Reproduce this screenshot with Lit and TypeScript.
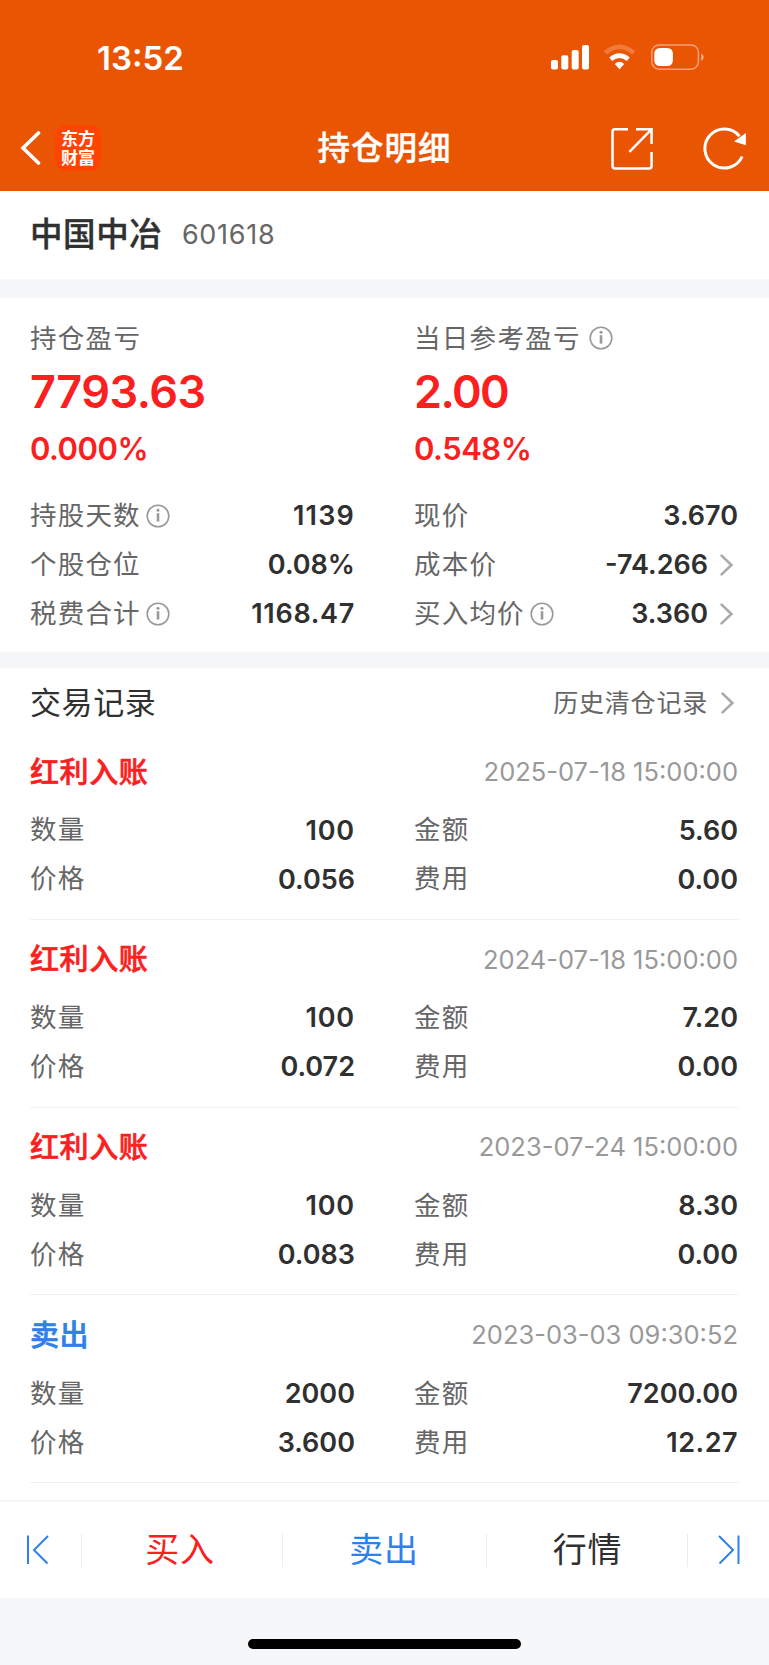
import { LitElement, html, svg, css, nothing } from "lit";
import { customElement, property } from "lit/decorators.js";

interface Trade {
  kind: string;
  tone: "up" | "down";
  time: string;
  qty: string;
  amount: string;
  price: string;
  fee: string;
}

const trades: Trade[] = [
  { kind: "红利入账", tone: "up", time: "2025-07-18 15:00:00", qty: "100", amount: "5.60", price: "0.056", fee: "0.00" },
  { kind: "红利入账", tone: "up", time: "2024-07-18 15:00:00", qty: "100", amount: "7.20", price: "0.072", fee: "0.00" },
  { kind: "红利入账", tone: "up", time: "2023-07-24 15:00:00", qty: "100", amount: "8.30", price: "0.083", fee: "0.00" },
  { kind: "卖出", tone: "down", time: "2023-03-03 09:30:52", qty: "2000", amount: "7200.00", price: "3.600", fee: "12.27" },
];

const infoIcon = html`<svg class="info" width="24" height="24" viewBox="0 0 24 24" fill="none" stroke="#999">
  <circle cx="12" cy="12" r="10.8" stroke-width="1.6" />
  <path d="M12 9.2V17.6" stroke-width="2.6" />
  <circle cx="12" cy="6.2" r="1.5" fill="#999" stroke="none" />
</svg>`;

const chevron = html`<svg class="chev" width="14" height="22" viewBox="0 0 14 22" fill="none" stroke="#aaa" stroke-width="2.6">
  <path d="M1.6 1.6L11.4 11L1.6 20.4" stroke-linecap="round" stroke-linejoin="miter" />
</svg>`;

// The digit "1" is narrow in Inter: spread numbers out by how many of them they hold.
const tracking = (value: string) => ((value.split("1").length - 1) * 2.4) / Math.max(value.length, 1);

@customElement("data-row")
export class DataRow extends LitElement {
  @property() label = "";
  @property() value = "";
  @property({ type: Boolean }) info = false;
  @property({ type: Boolean }) link = false;

  static styles = css`
    :host {
      display: flex;
      align-items: center;
      height: 49px;
    }
    .label {
      font: 400 26.5px/1 "Noto Sans CJK SC", sans-serif;
      letter-spacing: 1.2px;
      color: #666;
      padding-bottom: 3px;
    }
    .info { margin: 1px 0 0 5.5px; }
    .value {
      margin-left: auto;
      font: 600 27px/1 Inter, sans-serif;
      color: #303030;
    }
    .chev { margin: 0 4px 0 12px; }
  `;

  render() {
    return html`<span class="label">${this.label}</span>${this.info ? infoIcon : nothing}
      <span class="value" style="letter-spacing:${tracking(this.value)}px">${this.value}</span>${this.link ? chevron : nothing}`;
  }
}

@customElement("status-bar")
export class StatusBar extends LitElement {
  static styles = css`
    :host {
      display: flex;
      justify-content: space-between;
      align-items: center;
      height: 114px;
      padding: 0 64px 0 97px;
      box-sizing: border-box;
    }
    .time {
      padding-top: 2px;
      font: 600 33px/1 Inter, sans-serif;
      color: #fff;
    }
  `;

  render() {
    return html`<span class="time">13:52</span>
      <svg width="154" height="26" viewBox="0 0 154 26" fill="#fff">
        <rect x="0" y="16" width="7" height="9.4" rx="2" />
        <rect x="10.3" y="11.3" width="7" height="14.1" rx="2" />
        <rect x="20.7" y="6" width="7" height="19.4" rx="2" />
        <rect x="31" y="1" width="7" height="24.4" rx="2" />
        <path d="M54.2 9.3Q68.5 -2.7 82.8 9.3" transform="translate(0 -0.5)" fill="none" stroke="#fff" stroke-opacity=".22" stroke-width="4.6" />
        <path d="M59.7 15.2Q68.5 8 77.3 15.2" fill="none" stroke="#fff" stroke-width="4.6" />
        <path d="M63.8 20Q68.5 15.7 73.2 20L68.5 25.2Z" />
        <rect x="100.8" y="0.9" width="46.6" height="24.3" rx="7.4" fill="none" stroke="#fff" stroke-opacity=".45" stroke-width="1.5" />
        <rect x="103.3" y="4" width="18.6" height="18" rx="5.4" />
        <path d="M150.2 9.5V17Q152.8 15.6 152.8 13.2T150.2 9.5Z" fill-opacity=".5" />
      </svg>`;
  }
}

@customElement("nav-header")
export class NavHeader extends LitElement {
  static styles = css`
    :host {
      display: grid;
      grid-template-columns: 1fr auto 1fr;
      align-items: center;
      height: 77px;
      padding: 0 22px 9px 20px;
      box-sizing: border-box;
      color: #fff;
    }
    .left { display: flex; align-items: center; gap: 14px; }
    .logo {
      display: grid;
      place-content: center;
      width: 46px;
      height: 46px;
      padding-bottom: 2px;
      box-sizing: border-box;
      border-radius: 9px;
      background: #ff4400;
      text-align: center;
      font: 700 17px/19px "Noto Sans CJK SC", sans-serif;
    }
    .title {
      padding: 0 0 3px 2px;
      font: 500 32.5px/1 "Noto Sans CJK SC", sans-serif;
      letter-spacing: 1px;
      -webkit-text-stroke: 0.4px currentColor;
    }
    .right { display: flex; justify-content: flex-end; align-items: center; gap: 49px; }
  `;

  render() {
    return html`<div class="left">
        <svg width="21" height="34" viewBox="0 0 21 34" fill="none" stroke="#fff" stroke-width="3.6">
          <path d="M18.5 2L3 17L18.5 32" stroke-linecap="round" />
        </svg>
        <div class="logo"><span>东方<br />财富</span></div>
      </div>
      <div class="title">持仓明细</div>
      <div class="right">
        <svg width="43" height="44" viewBox="0 0 43 44" fill="none" stroke="#fff" stroke-width="2.5">
          <path d="M17 3.2H4Q1.5 3.2 1.5 5.7V40Q1.5 42.4 4 42.4H38.2Q40.6 42.4 40.6 40V26" />
          <path d="M25 3.2H40.6V18M40 3.8L18.4 25.8" />
        </svg>
        <svg width="44" height="44" viewBox="0 0 44 44" fill="none" stroke="#fff" stroke-width="3">
          <path d="M36.5 10.2A19.5 19.5 0 1 0 39.2 30.5" />
          <path d="M42.9 7.1V19.2L31 15.4Z" fill="#fff" stroke="none" />
        </svg>
      </div>`;
  }
}

@customElement("trade-item")
export class TradeItem extends LitElement {
  @property({ attribute: false }) trade!: Trade;

  static styles = css`
    :host {
      display: block;
      height: 187.75px;
      padding-top: 14.5px;
      box-sizing: border-box;
      border-bottom: 1px solid #f1f1f1;
    }
    .head {
      display: flex;
      justify-content: space-between;
      align-items: center;
      height: 50px;
      margin-bottom: 9px;
    }
    .kind {
      font: 500 29px/1 "Noto Sans CJK SC", sans-serif;
      letter-spacing: 0.6px;
      padding-bottom: 3px;
      -webkit-text-stroke: 0.6px currentColor;
    }
    .up { color: #fa2020; }
    .down { color: #2f80e8; }
    .time {
      margin-right: 1px;
      font: 400 25.5px/1 Inter, sans-serif;
      color: #999;
    }
    .pairs {
      display: grid;
      grid-template-columns: 325px 324px;
      column-gap: 59px;
    }
  `;

  render() {
    const t = this.trade;
    return html`<div class="head">
        <span class="kind ${t.tone}">${t.kind}</span><span class="time">${t.time}</span>
      </div>
      <div class="pairs">
        <data-row label="数量" value=${t.qty}></data-row>
        <data-row label="金额" value=${t.amount}></data-row>
        <data-row label="价格" value=${t.price}></data-row>
        <data-row label="费用" value=${t.fee}></data-row>
      </div>`;
  }
}

@customElement("action-bar")
export class ActionBar extends LitElement {
  static styles = css`
    :host {
      display: grid;
      grid-template-columns: 82px 201px 204px 201px 1fr;
      align-items: center;
      height: 98px;
      border-top: 2px solid #f5f6f7;
      box-sizing: border-box;
      background: #fff;
    }
    .cell {
      display: grid;
      place-items: center;
      height: 33px;
      box-sizing: border-box;
      font: 400 34px/1 "Noto Sans CJK SC", sans-serif;
      letter-spacing: 0.8px;
      border-right: 1px solid #ececec;
    }
    .cell:last-child { border-right: none; }
    .cell:first-child { padding-right: 6px; }
    .text { margin-top: -4px; }
    .buy { color: #fa2020; padding-right: 4px; }
    .sell { color: #2f80e8; padding-right: 1px; }
    .quote { color: #303030; padding-left: 1px; }
  `;

  private jump(flip: boolean) {
    const d = flip ? "M2 1L16 15L2.5 28.5M21.5 0.5V29" : "M22 1L8 15L21.5 28.5M2 0.5V29";
    return html`<svg width="23" height="30" viewBox="0 0 23 30" fill="none" stroke="#2f80e8" stroke-width="2">
      ${svg`<path d=${d} />`}
    </svg>`;
  }

  render() {
    return html`<div class="cell">${this.jump(false)}</div>
      <div class="cell buy"><span class="text">买入</span></div>
      <div class="cell sell"><span class="text">卖出</span></div>
      <div class="cell quote"><span class="text">行情</span></div>
      <div class="cell">${this.jump(true)}</div>`;
  }
}

@customElement("app-root")
export class AppRoot extends LitElement {
  static styles = css`
    :host {
      display: flex;
      flex-direction: column;
      width: 769px;
      height: 1665px;
      overflow: hidden;
      background: #fff;
    }
    .top { background: #ea5504; flex: none; }
    .stock {
      display: flex;
      align-items: center;
      flex: none;
      height: 88px;
      padding: 0 30px 2px;
      box-sizing: border-box;
    }
    .name {
      padding-bottom: 3px;
      font: 500 32.5px/1 "Noto Sans CJK SC", sans-serif;
      letter-spacing: 0.6px;
      color: #303030;
      -webkit-text-stroke: 0.4px currentColor;
    }
    .code {
      margin-left: 19.5px;
      font: 400 27px/1 Inter, sans-serif;
      letter-spacing: 0.7px;
      color: #666;
    }
    .gap { flex: none; background: #f6f7f9; height: 19px; }
    .gap.small { height: 16px; }
    .summary {
      flex: none;
      display: grid;
      grid-template-columns: 325px 324px;
      column-gap: 59px;
      height: 354px;
      padding: 15px 30px 0;
      box-sizing: border-box;
      align-content: start;
    }
    .pl { height: 178px; }
    .plabel {
      display: flex;
      align-items: center;
      height: 49px;
      font: 400 26.5px/1 "Noto Sans CJK SC", sans-serif;
      letter-spacing: 1.3px;
      color: #666;
    }
    .plabel .info { margin-left: 8.5px; }
    .big {
      font: 600 45px/60px Inter, sans-serif;
      letter-spacing: -0.5px;
      color: #fa2020;
    }
    .big.day { letter-spacing: -1.6px; }
    .pct {
      font: 600 31px/54px Inter, sans-serif;
      letter-spacing: -0.5px;
      color: #fa2020;
    }
    .records { flex: 1; padding: 0 30px; }
    .rhead {
      display: flex;
      align-items: center;
      height: 64px;
    }
    .rtitle {
      font: 400 31px/1 "Noto Sans CJK SC", sans-serif;
      letter-spacing: 0.6px;
      color: #303030;
    }
    .rmore {
      margin-left: auto;
      font: 400 25px/1 "Noto Sans CJK SC", sans-serif;
      letter-spacing: 0.8px;
      color: #666;
    }
    .rhead .chev { margin: 6px 4px 0 13px; }
    .rhead .rmore { padding-top: 2px; }
    .home {
      flex: none;
      display: flex;
      justify-content: center;
      height: 67px;
      padding-top: 41px;
      box-sizing: border-box;
      background: #f6f7f9;
    }
    .pill { width: 273px; height: 10px; border-radius: 5px; background: #000; }
  `;

  render() {
    return html`
      <div class="top"><status-bar></status-bar><nav-header></nav-header></div>
      <div class="stock"><span class="name">中国中冶</span><span class="code">601618</span></div>
      <div class="gap"></div>
      <section class="summary">
        <div class="pl">
          <div class="plabel">持仓盈亏</div>
          <div class="big">7793.63</div>
          <div class="pct">0.000%</div>
        </div>
        <div class="pl">
          <div class="plabel">当日参考盈亏${infoIcon}</div>
          <div class="big day">2.00</div>
          <div class="pct">0.548%</div>
        </div>
        <data-row label="持股天数" value="1139" info></data-row>
        <data-row label="现价" value="3.670"></data-row>
        <data-row label="个股仓位" value="0.08%"></data-row>
        <data-row label="成本价" value="-74.266" link></data-row>
        <data-row label="税费合计" value="1168.47" info></data-row>
        <data-row label="买入均价" value="3.360" info link></data-row>
      </section>
      <div class="gap small"></div>
      <section class="records">
        <div class="rhead">
          <span class="rtitle">交易记录</span><span class="rmore">历史清仓记录</span>${chevron}
        </div>
        ${trades.map((t) => html`<trade-item .trade=${t}></trade-item>`)}
      </section>
      <action-bar></action-bar>
      <div class="home"><div class="pill"></div></div>
    `;
  }
}
